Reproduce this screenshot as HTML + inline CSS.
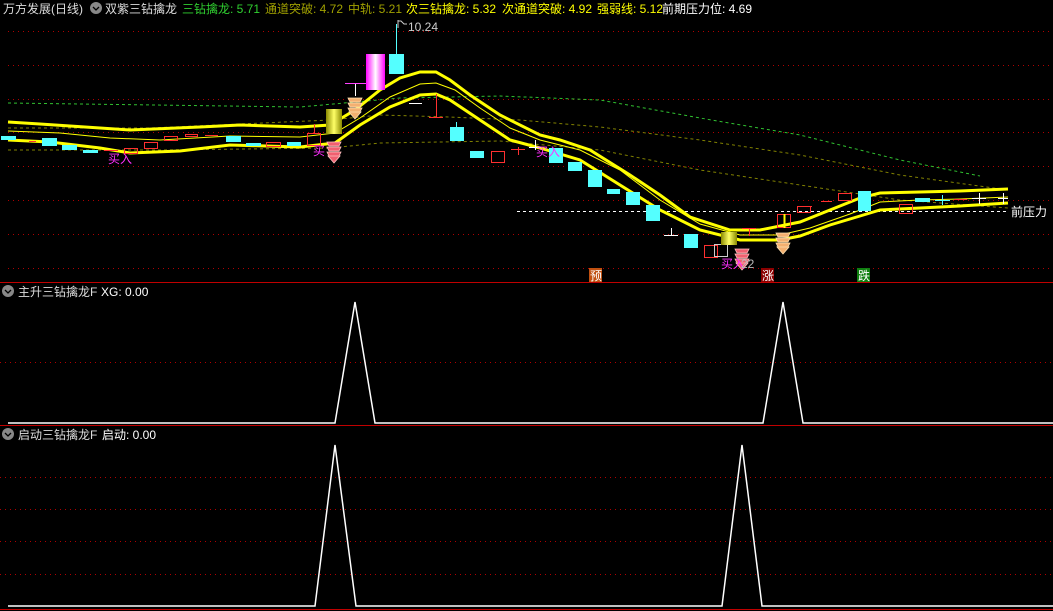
<!DOCTYPE html>
<html><head><meta charset="utf-8"><style>
html,body{margin:0;padding:0;background:#000;width:1053px;height:611px;overflow:hidden}
svg{display:block}
text{font-family:"Liberation Sans","Noto Sans CJK SC",sans-serif;font-size:12px}
</style></head><body>
<svg width="1053" height="611" viewBox="0 0 1053 611" xmlns="http://www.w3.org/2000/svg">
<defs>
<linearGradient id="gold" x1="0" x2="1"><stop offset="0" stop-color="#8a8a00"/><stop offset=".5" stop-color="#ffff66"/><stop offset="1" stop-color="#8a8a00"/></linearGradient>
<linearGradient id="mag" x1="0" x2="1"><stop offset="0" stop-color="#ff00ff"/><stop offset=".5" stop-color="#ffffff"/><stop offset="1" stop-color="#ff00ff"/></linearGradient>
<g id="topO"><path d="M-7,0 h14 l-2,4 h-10z M-7,5 h14 l-2,4 h-10z M-7,10 h14 l-2,4 h-10z M-6,14 h12 l-6,7z" fill="#f4b070" stroke="#fde0b0" stroke-width=".8"/></g>
<g id="topR"><path d="M-7,0 h14 l-2,4 h-10z M-7,5 h14 l-2,4 h-10z M-7,10 h14 l-2,4 h-10z M-6,14 h12 l-6,7z" fill="#f06070" stroke="#ffc0c0" stroke-width=".8"/></g>
</defs>
<g stroke="#b00000" stroke-dasharray="1,4" stroke-width="1">
<line x1="8" y1="31.5" x2="1053" y2="31.5"/><line x1="8" y1="65.5" x2="1053" y2="65.5"/><line x1="8" y1="99.5" x2="1053" y2="99.5"/><line x1="8" y1="132.5" x2="1053" y2="132.5"/><line x1="8" y1="166.5" x2="1053" y2="166.5"/><line x1="8" y1="200.5" x2="1053" y2="200.5"/><line x1="8" y1="234.5" x2="1053" y2="234.5"/><line x1="8" y1="268.5" x2="1053" y2="268.5"/>
<line x1="0" y1="362.5" x2="1053" y2="362.5"/>
<line x1="0" y1="477.5" x2="1053" y2="477.5"/><line x1="0" y1="509.5" x2="1053" y2="509.5"/><line x1="0" y1="541.5" x2="1053" y2="541.5"/><line x1="0" y1="574.5" x2="1053" y2="574.5"/>
</g>
<line x1="0" y1="282.5" x2="1053" y2="282.5" stroke="#c00000"/>
<line x1="0" y1="425.5" x2="1053" y2="425.5" stroke="#c00000"/>
<line x1="0" y1="609.5" x2="1053" y2="609.5" stroke="#c00000"/>
<polyline fill="none" stroke="#30c030" stroke-dasharray="3,3" points="8,103 300,107 400,98 500,96 600,100 700,118 800,135 900,160 960,172 980,176"/>
<polyline fill="none" stroke="#808000" stroke-dasharray="3,3" points="8,128 150,128 330,120 380,115 450,117 520,120 600,127 700,140 800,155 900,175 1008,190"/>
<polyline fill="none" stroke="#808000" stroke-dasharray="3,3" points="8,150 160,150 330,148 380,143 500,141 600,150 700,170 800,185 900,200 1008,208"/>
<line x1="517" y1="211.5" x2="1008" y2="211.5" stroke="#fff" stroke-dasharray="3,3"/>
<polyline fill="none" stroke="#ffff00" stroke-width="3" points="8,122 40,124 100,128 130,130 200,127 240,125 300,127 330,125 355,110 380,90 400,78 420,72 436,72 450,80 470,95 500,115 540,135 560,140 590,150 630,175 660,195 690,217 730,230 760,230 800,222 830,210 860,198 880,193 920,192 960,191 1008,189"/>
<polyline fill="none" stroke="#ffff00" stroke-width="1" points="8,131 60,133 110,138 160,140 230,136 300,137 335,133 360,118 390,97 420,84 436,83 455,90 480,108 510,128 540,140 580,150 620,170 660,200 700,224 740,235 780,235 810,228 850,214 880,202 920,200 960,199 1008,197"/>
<polyline fill="none" stroke="#ffff00" stroke-width="3" points="8,140 50,142 100,148 130,153 180,151 230,145 300,147 335,143 360,125 390,107 420,95 436,94 450,100 480,120 510,140 540,148 580,160 620,185 660,210 700,230 740,240 780,240 800,236 830,225 860,216 880,210 920,208 960,206 1008,203"/>
<g fill="#54ffff">
<rect x="1" y="136" width="15" height="4"/><rect x="42" y="138" width="15" height="8"/><rect x="62" y="145" width="15" height="5"/><rect x="83" y="150" width="15" height="3"/><rect x="226" y="136" width="15" height="6"/><rect x="246" y="143" width="15" height="3"/><rect x="287" y="142" width="14" height="4"/>
<rect x="389" y="54" width="15" height="20"/><rect x="396" y="24" width="1" height="30"/>
<rect x="450" y="127" width="14" height="14"/><rect x="456" y="122" width="1" height="5"/><rect x="470" y="151" width="14" height="7"/>
<rect x="549" y="148" width="14" height="15"/><rect x="568" y="162" width="14" height="9"/><rect x="588" y="170" width="14" height="17"/><rect x="607" y="189" width="13" height="5"/><rect x="626" y="192" width="14" height="13"/><rect x="646" y="205" width="14" height="16"/><rect x="684" y="234" width="14" height="14"/>
<rect x="858" y="191" width="13" height="20"/><rect x="915" y="198" width="15" height="4"/><rect x="935" y="200" width="15" height="1"/><rect x="942" y="195" width="1" height="10"/>
</g>
<g fill="none" stroke="#ff3030">
<line x1="29" y1="141.5" x2="36" y2="141.5"/><line x1="104" y1="150.5" x2="118" y2="150.5"/>
<rect x="124.5" y="148.5" width="13" height="5"/><rect x="144.5" y="142.5" width="13" height="6"/><rect x="164.5" y="136.5" width="13" height="4"/><rect x="185.5" y="134.5" width="12" height="2"/><line x1="205" y1="135.5" x2="218" y2="135.5"/>
<rect x="266.5" y="142.5" width="14" height="4"/><rect x="307.5" y="133.5" width="13" height="12"/><line x1="314.5" y1="124" x2="314.5" y2="133"/>
<line x1="429" y1="117.5" x2="443" y2="117.5"/><line x1="436.5" y1="94" x2="436.5" y2="117"/>
<rect x="491.5" y="151.5" width="13" height="11"/><line x1="511" y1="149.5" x2="525" y2="149.5"/><line x1="518.5" y1="147" x2="518.5" y2="155"/>
<rect x="704.5" y="245.5" width="13" height="12"/><line x1="742" y1="228.5" x2="756" y2="228.5"/><line x1="749.5" y1="228" x2="749.5" y2="236"/>
<rect x="777.5" y="214.5" width="13" height="13"/><rect x="797.5" y="206.5" width="13" height="6"/><line x1="801" y1="206.5" x2="812" y2="206.5"/><line x1="821" y1="201.5" x2="832" y2="201.5"/>
<rect x="838.5" y="193.5" width="13" height="7"/><rect x="899.5" y="204.5" width="13" height="9"/><line x1="954" y1="199.5" x2="967" y2="199.5"/>
</g>
<line x1="784.5" y1="214" x2="784.5" y2="228" stroke="#ffff00" stroke-width="2"/>
<g stroke="#fff">
<line x1="345" y1="83.5" x2="368" y2="83.5" stroke="#ff40ff"/><line x1="355.5" y1="84" x2="355.5" y2="96"/>
<line x1="409" y1="103.5" x2="422" y2="103.5"/>
<line x1="529" y1="147.5" x2="541" y2="147.5"/><line x1="535.5" y1="140" x2="535.5" y2="150"/>
<line x1="664" y1="235.5" x2="678" y2="235.5"/><line x1="671.5" y1="228" x2="671.5" y2="235"/>
<rect x="714.5" y="244.5" width="13" height="12" fill="none" stroke="#ccc"/>
<line x1="972" y1="198.5" x2="986" y2="198.5"/><line x1="979.5" y1="193" x2="979.5" y2="204"/>
<line x1="998" y1="198.5" x2="1008" y2="198.5"/><line x1="1003.5" y1="193" x2="1003.5" y2="204"/>
</g>
<rect x="326" y="109" width="16" height="25" fill="url(#gold)"/>
<rect x="721" y="232" width="16" height="13" fill="url(#gold)"/>
<rect x="366" y="54" width="19" height="36" fill="url(#mag)"/>
<use href="#topO" x="355" y="98"/><use href="#topR" x="334" y="142"/><use href="#topR" x="742" y="249"/><use href="#topO" x="783" y="233"/>
<text x="108" y="163" fill="#ff30ff">买入</text>
<text x="313" y="155" fill="#ff30ff">买</text>
<text x="536" y="156" fill="#ff30ff">买入</text>
<text x="721" y="268" fill="#ff30ff">买入</text><text x="741" y="268" fill="#bbb">22</text>
<path d="M398,20 v8 M398,21 h3 l3,3 h3" stroke="#ccc" fill="none"/>
<text x="408" y="31" fill="#ccc">10.24</text>
<text x="1011" y="216" fill="#fff">前压力</text>
<rect x="589" y="268" width="13" height="14" fill="#c05010"/><text x="590" y="280" fill="#fff">预</text>
<rect x="761" y="268" width="13" height="14" fill="#8b0000"/><text x="762" y="280" fill="#fff">涨</text>
<rect x="857" y="268" width="13" height="14" fill="#108010"/><text x="858" y="280" fill="#fff">跌</text>
<text x="3" y="13" fill="#ddd">万方发展(日线)</text>
<circle cx="96" cy="8" r="6" fill="#888"/><path d="M93,7 l3,3 l3,-3" stroke="#000" fill="none" stroke-width="1.3"/>
<text x="105" y="13" fill="#ddd">双紫三钻擒龙</text>
<text x="182" y="13" fill="#30d030">三钻擒龙: 5.71</text>
<text x="265" y="13" fill="#a0a000">通道突破: 4.72</text>
<text x="348" y="13" fill="#a0a000">中轨: 5.21</text>
<text x="406" y="13" fill="#ffff00">次三钻擒龙: 5.32</text>
<text x="502" y="13" fill="#ffff00">次通道突破: 4.92</text>
<text x="597" y="13" fill="#ffff00">强弱线: 5.12</text>
<text x="662" y="13" fill="#fff">前期压力位: 4.69</text>
<circle cx="8" cy="291" r="6" fill="#888"/><path d="M5,290 l3,3 l3,-3" stroke="#000" fill="none" stroke-width="1.3"/>
<text x="18" y="296" fill="#ddd">主升三钻擒龙F</text><text x="101" y="296" fill="#fff">XG: 0.00</text>
<polyline fill="none" stroke="#fff" stroke-width="1.5" points="8,423 335,423 355,302 375,423 763,423 783,302 803,423 1053,423"/>
<circle cx="8" cy="434" r="6" fill="#888"/><path d="M5,433 l3,3 l3,-3" stroke="#000" fill="none" stroke-width="1.3"/>
<text x="18" y="439" fill="#ddd">启动三钻擒龙F</text><text x="102" y="439" fill="#fff">启动: 0.00</text>
<polyline fill="none" stroke="#fff" stroke-width="1.5" points="8,606 315,606 335,445 356,606 722,606 742,445 762,606 1053,606"/>
</svg>
</body></html>
